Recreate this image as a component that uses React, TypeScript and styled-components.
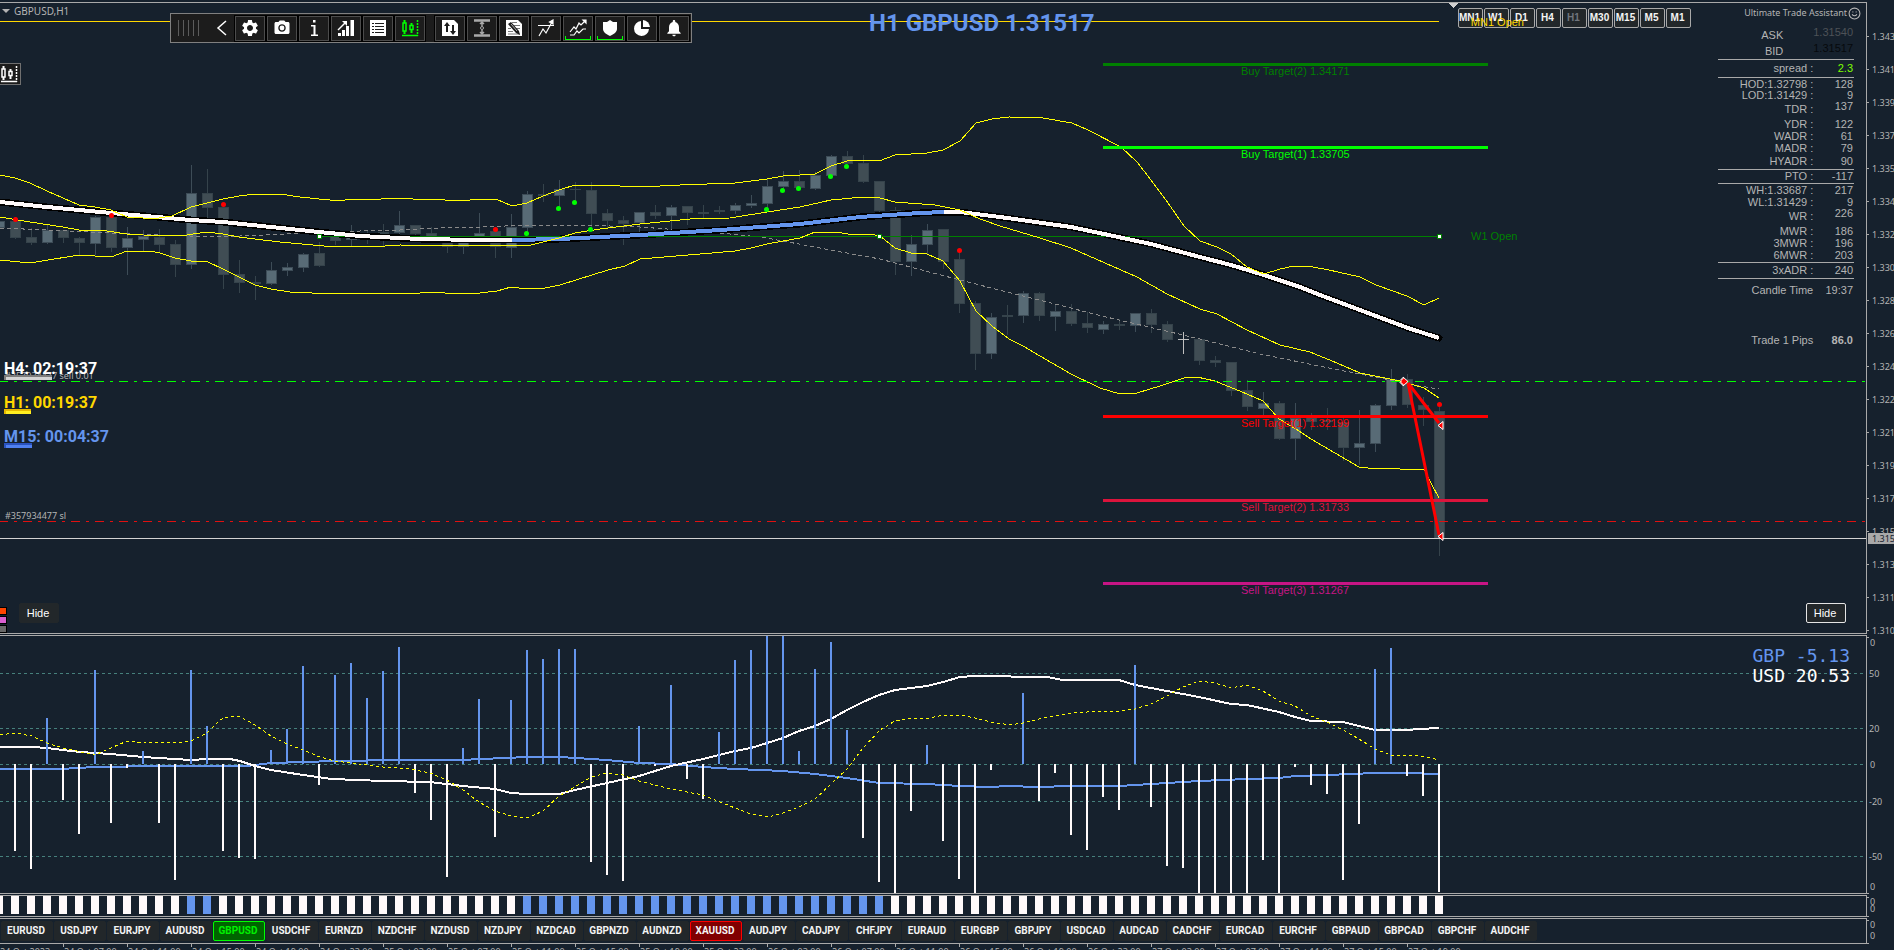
import React from "react";
import styled, { createGlobalStyle, css } from "styled-components";
import { Smile } from "lucide-react";
import { MdSettings, MdPhotoCamera, MdNotifications } from "react-icons/md";

const colors = {
  bg: "#16212d",
  line: "#a9a9a9",
  text: "#b4b4b4",
  blue: "#6495ed",
  yellow: "#ffff00",
  gold: "#ffd700",
  button: "#22272a",
};

const sans = `"Liberation Sans", Arial, sans-serif`;
const ui = `"Noto Sans", sans-serif`;
const bold = `Roboto, "Liberation Sans", sans-serif`;

const GlobalStyle = createGlobalStyle`
  * { box-sizing: border-box; }
  body { margin: 0; background: ${colors.bg}; overflow: hidden; }
  button { font: inherit; padding: 0; margin: 0; cursor: pointer; }
`;

const Page = styled.main`
  display: flex;
  flex-direction: column;
  min-height: 100vh;
  padding-top: 2px;
  background: ${colors.bg};
  color: ${colors.text};
  font-family: ${sans};
  font-size: 11px;
`;

const Pane = styled.section<{ $height?: number }>`
  display: grid;
  grid-template-columns: minmax(0, 1fr) 28px;
  margin-bottom: 1px;
  ${(p) => (p.$height ? css`flex: none; height: ${p.$height}px;` : css`flex: 1; min-height: 600px;`)}
  &:last-of-type { margin-bottom: 0; }
`;

const Plot = styled.div`
  position: relative;
  display: flex;
  overflow: hidden;
  border: 1px solid ${colors.line};
  border-left: 0;
  border-right: 0;
`;

const Drawing = styled.svg`
  flex: 1;
  min-width: 0;
  height: 100%;
  display: block;
`;

const Scale = styled.svg`
  width: 28px;
  height: 100%;
  display: block;
  font-family: ${ui};
  font-size: 9px;
  fill: ${colors.text};
`;

const PlotText = styled.text<{ $size?: number; $ui?: boolean }>`
  font-family: ${(p) => (p.$ui ? ui : sans)};
  font-size: ${(p) => p.$size ?? 11}px;
`;

const SymbolName = styled.div`
  position: absolute;
  top: 1px;
  left: 2px;
  display: flex;
  align-items: center;
  gap: 4px;
  font: 10px/14px ${ui};
`;

const Arrow = styled.span`
  border: 4px solid transparent;
  border-top-color: ${colors.text};
  border-bottom: 0;
`;

const Toolbar = styled.div`
  position: absolute;
  top: 10px;
  left: 170px;
  display: flex;
  align-items: center;
  gap: 2px;
  height: 30px;
  padding: 0 2px 0 7px;
  border: 1px solid #808080;
  background: #1c1c1c;
`;

const Grip = styled.div`
  display: flex;
  gap: 4px;
  margin-right: 10px;
  i { width: 1px; height: 16px; background: #5c5c5c; }
`;

const Collapse = styled.button`
  display: flex;
  align-items: center;
  justify-content: center;
  width: 22px;
  height: 24px;
  border: 0;
  background: none;
  color: #fff;
`;

const Tool = styled.button<{ $on?: boolean; $lead?: boolean }>`
  position: relative;
  display: flex;
  align-items: center;
  justify-content: center;
  width: 30px;
  height: 25px;
  margin-left: ${(p) => (p.$lead ? 8 : 0)}px;
  border: 1px solid #4c4c4c;
  outline: 1px solid #000;
  background: #1c1c1c;
  color: #fff;
  ${(p) =>
    p.$on &&
    css`
      &::after {
        content: "";
        position: absolute;
        left: 1px;
        right: 1px;
        bottom: 0;
        height: 3px;
        border: 1px solid #00ff00;
        border-top: 0;
      }
    `}
`;

const SideTool = styled.button`
  position: absolute;
  top: 60px;
  left: 0;
  display: flex;
  align-items: center;
  width: 21px;
  height: 22px;
  border: 1px solid #707070;
  border-left: 0;
  background: #1c1c1c;
  color: #fff;
`;

const Headline = styled.h1`
  position: absolute;
  top: 6px;
  left: 869px;
  margin: 0;
  color: ${colors.blue};
  font: 700 24px/28px ${bold};
  white-space: nowrap;
`;

const Timeframes = styled.nav`
  position: absolute;
  top: 5px;
  right: 175px;
  display: flex;
  gap: 1px;
`;

const Timeframe = styled.button<{ $current?: boolean }>`
  width: 25px;
  height: 20px;
  border: 1px solid ${colors.line};
  border-radius: 2px;
  background: ${colors.button};
  color: ${(p) => (p.$current ? "#70757c" : "#f4f4f4")};
  && { padding-right: 2px; font: 700 10px/18px ${sans}; }
  white-space: nowrap;
`;

const OpenLabel = styled.span`
  position: absolute;
  top: 12px;
  right: 342px;
  color: ${colors.gold};
  font: 11px/14px ${sans};
`;

const Assistant = styled.aside`
  position: absolute;
  top: 0;
  right: 5px;
  width: 143px;
`;

const AssistantTitle = styled.h2`
  display: flex;
  align-items: center;
  justify-content: flex-end;
  gap: 1px;
  height: 20px;
  margin: 0 0 4px;
  font: 9px/18px ${ui};
  white-space: nowrap;
`;

const Stats = styled.table`
  width: 136px;
  border-spacing: 0;
  font: 11px/11px ${sans};
`;

const StatRow = styled.tr<{ $height: number; $rule?: boolean; $tone?: string; $raised?: boolean; $indent?: boolean; $strong?: boolean }>`
  height: ${(p) => p.$height}px;
  th, td {
    padding: 0;
    text-align: right;
    white-space: nowrap;
    border-bottom: ${(p) => (p.$rule ? `1px solid ${colors.line}` : "0")};
  }
  th { font-weight: 400; padding-right: ${(p) => (p.$indent ? 30 : 0)}px; }
  td {
    width: 40px;
    padding-right: 1px;
    color: ${(p) => p.$tone ?? "inherit"};
    vertical-align: ${(p) => (p.$raised ? "top" : "middle")};
    font-weight: ${(p) => (p.$strong ? 700 : 400)};
  }
`;

const Timers = styled.div`
  position: absolute;
  top: 356px;
  left: 4px;
  display: flex;
  flex-direction: column;
  gap: 14px;
`;

const Timer = styled.div<{ $color: string }>`
  height: 20px;
  color: ${(p) => p.$color};
  font: 700 16px/20px ${bold};
  white-space: nowrap;
`;

const Progress = styled.div<{ $width: number; $edge: string; $fill: string }>`
  width: ${(p) => p.$width}px;
  height: 5px;
  margin-top: -4px;
  border: 2px solid ${(p) => p.$edge};
  border-right: 0;
  border-bottom: 0;
  background: ${(p) => p.$fill};
`;

const HideButton = styled.button<{ $side: "left" | "right" }>`
  position: absolute;
  bottom: 10px;
  ${(p) => (p.$side === "left" ? "left: 19px" : "right: 20px")};
  width: 40px;
  height: 20px;
  border: 1px solid ${(p) => (p.$side === "left" ? colors.button : "#e4e4e4")};
  border-radius: 2px;
  background: ${colors.button};
  color: #fff;
  && { padding-right: 2px; font: 11px/18px ${sans}; }
`;

const Swatches = styled.div`
  position: absolute;
  bottom: 0;
  left: 0;
  display: flex;
  flex-direction: column;
  gap: 1px;
`;

const Swatch = styled.i<{ $color: string }>`
  width: 7px;
  height: 8px;
  border: 1px solid #000;
  border-left: 0;
  background: ${(p) => p.$color};
`;

const Strength = styled.div`
  position: absolute;
  top: 10px;
  right: 16px;
  font: 18px/20px "DejaVu Sans Mono", monospace;
  white-space: pre;
  color: #fff;
  div:first-child { color: ${colors.blue}; }
`;

const Pairs = styled.nav`
  display: flex;
  gap: 1px;
  padding: 2px 1px;
`;

const Pair = styled.button<{ $tone?: "green" | "red" }>`
  flex: none;
  width: 52px;
  height: 20px;
  border: 1px solid ${(p) => (p.$tone === "green" ? "#00ff00" : p.$tone === "red" ? "#ff0000" : colors.button)};
  border-radius: 2px;
  background: ${(p) => (p.$tone === "green" ? "#006400" : p.$tone === "red" ? "#800000" : colors.button)};
  color: ${(p) => (p.$tone === "green" ? "#00f000" : "#f4f4f4")};
  && { padding-right: 2px; font: 700 10px/18px ${bold}; }
`;

const TimeAxis = styled.div`
  display: flex;
  flex: none;
  height: 6px;
  overflow: hidden;
  font: 9px/12px ${ui};
  span {
    flex: none;
    width: 64px;
    height: 3px;
    border-left: 1px solid ${colors.line};
    white-space: nowrap;
  }
  span::before { content: ""; display: block; height: 2px; }
  span:first-child { width: 63px; border-left: 0; }
`;

const x = (k: number) => 15 + 16 * k;

/* [high, body top, body bottom, low, kind] for each bar, starting one bar left of the edge; kind: 0 falling, 1 rising, 2 doji */
const candles: [number, number, number, number, number][] = [
  [221, 221, 228, 228, 1], [221, 221, 238, 238, 0], [228, 237, 243, 244, 0], [224, 230, 243, 243, 1], [230, 230, 238, 242, 0],
  [237, 238, 243, 255, 0], [216, 217, 244, 254, 1], [217, 217, 248, 251, 0], [227, 238, 248, 274, 1], [230, 236, 240, 251, 1],
  [229, 237, 245, 251, 0], [240, 244, 265, 276, 0], [165, 193, 265, 268, 1], [169, 193, 208, 218, 0], [207, 207, 275, 288, 0],
  [260, 274, 283, 292, 0], [276, 282, 284, 299, 0], [262, 270, 284, 284, 1], [263, 267, 271, 275, 1], [253, 254, 268, 271, 1],
  [242, 253, 266, 266, 0], [234, 236, 241, 244, 0], [225, 237, 240, 246, 1], [230, 233, 234, 243, 0], [224, 232, 234, 245, 0],
  [211, 225, 233, 234, 1], [225, 225, 234, 237, 0], [227, 233, 237, 240, 0], [240, 242, 247, 252, 0], [240, 241, 247, 253, 1],
  [213, 233, 237, 240, 1], [227, 231, 247, 257, 0], [214, 227, 248, 257, 1], [191, 194, 228, 232, 1], [184, 194, 196, 201, 0],
  [180, 189, 196, 208, 1], [182, 189, 190, 202, 0], [182, 190, 214, 228, 0], [209, 213, 221, 228, 0], [216, 220, 224, 244, 0],
  [212, 212, 223, 232, 1], [205, 212, 216, 218, 0], [205, 207, 216, 230, 1], [206, 206, 213, 224, 0], [205, 212, 214, 218, 0],
  [206, 210, 212, 213, 0], [203, 205, 211, 213, 1], [195, 203, 206, 207, 1], [178, 186, 204, 210, 1], [171, 181, 187, 190, 1],
  [170, 181, 188, 189, 0], [172, 175, 189, 189, 1], [155, 156, 176, 176, 1], [151, 156, 164, 164, 0], [155, 163, 182, 182, 0],
  [181, 181, 211, 212, 0], [207, 210, 262, 274, 0], [235, 244, 262, 275, 1], [224, 230, 245, 253, 1], [229, 229, 262, 268, 0],
  [253, 259, 304, 312, 0], [301, 303, 354, 369, 0], [313, 317, 354, 358, 1], [305, 315, 317, 334, 0], [291, 293, 316, 322, 1],
  [292, 293, 316, 320, 0], [304, 311, 317, 330, 1], [304, 311, 324, 325, 0], [312, 323, 328, 332, 0], [321, 324, 330, 333, 1],
  [319, 324, 326, 329, 0], [313, 313, 326, 331, 1], [309, 313, 325, 332, 0], [321, 324, 340, 341, 0], [332, 339, 340, 353, 2],
  [339, 339, 361, 364, 0], [356, 360, 363, 366, 0], [362, 362, 391, 395, 0], [380, 390, 407, 410, 0], [392, 403, 409, 416, 1],
  [401, 403, 439, 439, 0], [403, 418, 439, 459, 1], [413, 417, 422, 429, 0], [408, 420, 422, 429, 0], [418, 422, 448, 460, 0],
  [410, 443, 448, 464, 1], [404, 405, 444, 451, 1], [369, 379, 406, 409, 1], [374, 379, 405, 407, 0], [397, 405, 410, 425, 0],
  [407, 411, 539, 555, 0],
];

const upperBand =
  "0,175 15,178 30,183 47,191 63,198 79,205 95,207 111,210 127,217 143,218 159,218 172,216 191,207 207,203 223,199 239,196 255,194 280,194 300,197 319,199 330,200 345,200 360,199 373,200 390,198 405,198 420,200 430,199 445,200 470,200 496,199 512,206 527,203 543,196 559,190 575,185 600,185 640,187 680,185 735,183 767,179 783,176 800,175 815,174 831,166 847,161 863,160 879,161 895,155 927,153 943,150 960,141 976,123 992,119 1009,117 1043,118 1072,123 1088,130 1121,147 1137,162 1151,180 1166,200 1184,226 1200,241 1217,247 1231,254 1247,267 1264,274 1280,269 1294,266 1313,267 1329,270 1360,277 1376,285 1407,296 1424,305 1439,298";
const middleBand =
  "0,217 30,222 63,227 79,230 100,230 127,234 143,235 180,236 207,232 223,234 239,237 255,239 280,242 335,247 360,246 385,246 400,245 480,246 500,245 527,246 543,242 559,238 575,233 600,229 640,224 690,219 730,218 767,212 800,207 831,200 863,197 880,198 895,202 935,205 960,210 980,219 1000,226 1040,238 1071,248 1105,263 1137,277 1167,294 1200,309 1217,314 1247,330 1280,345 1310,352 1337,363 1360,373 1400,381 1424,388 1439,398";
const lowerBand =
  "0,260 30,263 79,255 111,257 127,251 150,251 160,253 175,258 191,261 208,262 223,269 239,277 255,285 271,289 290,292 312,293 420,293 430,292 445,293 480,293 497,291 511,287 527,289 545,288 560,285 608,270 625,266 640,259 700,254 735,251 751,248 767,244 800,238 815,232 835,232 848,234 875,235 880,236 895,248 911,253 927,254 943,261 960,281 976,311 992,326 1009,339 1023,346 1040,356 1071,374 1100,388 1120,394 1137,393 1160,386 1184,378 1197,377 1215,381 1247,394 1263,401 1279,419 1296,429 1311,439 1359,467 1368,468 1400,469 1424,469 1431,483 1439,498";
const slowAverage =
  "0,228 70,231 130,234 190,236 240,236 310,233 360,231 400,230 440,228 480,227 530,225 580,225 640,227 680,230 720,233 760,237 783,241 830,250 880,259 895,263 960,280 1007,292 1055,304 1102,316 1149,327 1200,339 1260,354 1329,368 1370,376 1419,386 1439,389";
const trendStart = "0,202 47,207 111,213 191,220 223,222 319,232 360,236 420,239 480,240 512,240";
const trendRise = "512,240 560,239 640,235 720,230 800,224 860,217 920,213 944,212";
const trendFall =
  "944,212 960,212 1000,217 1071,227 1104,234 1151,244 1200,257 1231,265 1264,275 1300,287 1320,295 1360,310 1408,328 1439,338";

const redDots = [[15, 219], [111, 215], [223, 204], [495, 229], [959, 250], [1439, 404]];
const greenDots = [[526, 233], [558, 208], [574, 202], [590, 229], [766, 209], [782, 190], [798, 188], [830, 176], [846, 166]];

const targets = [
  { y: 64, color: "#008000", label: "Buy Target(2) 1.34171" },
  { y: 147, color: "#00ff00", label: "Buy Target(1) 1.33705" },
  { y: 416, color: "#ff0000", label: "Sell Target(1) 1.32199" },
  { y: 500, color: "#dc143c", label: "Sell Target(2) 1.31733" },
  { y: 583, color: "#c71585", label: "Sell Target(3) 1.31267" },
];

const prices = ["1.343", "1.341", "1.339", "1.337", "1.335", "1.334", "1.332", "1.330", "1.328", "1.326", "1.324", "1.322", "1.321", "1.319", "1.317", "1.315", "1.313", "1.311", "1.310"];

/* bar index -> y of the bar's free end */
const strengthUp: Record<number, number> = {
  2: 718, 5: 670, 8: 751, 11: 670, 12: 726, 16: 750, 17: 729, 18: 666, 20: 675, 21: 663, 22: 698, 23: 671, 24: 647, 28: 748, 29: 699,
  31: 700, 32: 650, 33: 659, 34: 649, 35: 649, 39: 726, 41: 685, 44: 732, 45: 660, 46: 650, 47: 636, 48: 636, 49: 751, 50: 669,
  51: 642, 52: 730, 57: 745, 63: 693, 70: 665, 85: 669, 86: 648,
};
const strengthDown: Record<number, number> = {
  0: 851, 1: 869, 3: 800, 4: 834, 6: 823, 7: 768, 9: 823, 10: 880, 13: 851, 14: 858, 15: 859, 19: 785, 25: 793, 26: 820, 27: 877,
  30: 837, 36: 862, 37: 875, 38: 881, 40: 766, 42: 779, 43: 799, 53: 838, 54: 882, 55: 893, 56: 811, 58: 841, 59: 879, 60: 893,
  61: 770, 64: 801, 65: 773, 66: 835, 67: 850, 68: 797, 69: 810, 71: 807, 72: 866, 73: 868, 74: 893, 75: 893, 76: 893, 77: 893,
  78: 860, 79: 893, 80: 767, 81: 785, 82: 794, 83: 880, 84: 824, 87: 776, 88: 796, 89: 892,
};
const usdLine =
  "0,747 32,747 47,748 63,750 80,752 111,754 143,757 175,759 191,760 207,759 230,759 240,761 255,766 271,770 303,775 332,779 383,781 430,782 463,786 495,789 511,793 527,794 559,794 575,790 607,783 639,776 671,766 703,759 735,751 751,748 767,743 783,738 799,731 815,726 831,719 847,710 863,702 879,695 895,690 927,686 943,682 960,677 975,676 1047,677 1063,680 1119,680 1135,685 1199,697 1231,704 1247,705 1279,712 1295,717 1311,721 1343,722 1359,726 1375,730 1407,730 1420,729 1439,728";
const gbpLine =
  "0,769 60,769 95,767 160,766 247,766 271,763 335,761 400,760 460,760 527,757 560,757 607,760 639,763 671,764 703,767 735,769 760,770 783,771 815,774 847,778 879,783 927,784 960,786 991,787 1007,786 1039,787 1070,786 1119,786 1151,784 1199,781 1247,779 1279,778 1295,776 1327,775 1375,773 1407,773 1439,774";
const spreadLine =
  "0,735 15,733 32,736 47,743 63,748 95,755 111,748 127,741 145,743 160,742 175,743 191,741 207,733 215,725 223,718 239,716 255,725 271,736 287,744 303,750 320,757 335,761 383,767 410,769 430,773 447,780 463,790 479,802 495,811 511,816 527,818 543,811 559,796 575,787 591,777 607,773 623,775 639,781 671,789 703,795 735,808 751,814 768,817 783,813 799,807 815,799 831,784 847,769 863,748 880,730 895,721 911,718 930,718 943,715 960,715 975,718 991,722 1010,725 1023,723 1039,719 1071,713 1087,712 1119,711 1135,709 1151,704 1167,696 1183,687 1199,681 1215,683 1231,688 1247,685 1263,691 1279,701 1295,706 1311,716 1327,722 1343,730 1359,739 1375,749 1391,755 1410,755 1427,757 1439,760";

const isBlueBar = (k: number) => k === 11 || k === 12 || (k >= 32 && k <= 54);

const pairs = "EURUSD USDJPY EURJPY AUDUSD GBPUSD USDCHF EURNZD NZDCHF NZDUSD NZDJPY NZDCAD GBPNZD AUDNZD XAUUSD AUDJPY CADJPY CHFJPY EURAUD EURGBP GBPJPY USDCAD AUDCAD CADCHF EURCAD EURCHF GBPAUD GBPCAD GBPCHF AUDCHF".split(" ");

const times = ["24 Oct 2023", "24 Oct 07:00", "24 Oct 11:00", "24 Oct 15:00", "24 Oct 19:00", "24 Oct 23:00", "25 Oct 03:00", "25 Oct 07:00", "25 Oct 11:00", "25 Oct 15:00", "25 Oct 19:00", "25 Oct 23:00", "26 Oct 03:00", "26 Oct 07:00", "26 Oct 11:00", "26 Oct 15:00", "26 Oct 19:00", "26 Oct 23:00", "27 Oct 03:00", "27 Oct 07:00", "27 Oct 11:00", "27 Oct 15:00", "27 Oct 19:00"];

type Stat = { label: string; value: string; height: number; rule?: boolean; tone?: string; raised?: boolean; indent?: boolean };
const stats: Stat[] = [
  { label: "ASK", value: "1.31540", height: 16, tone: "#4d5257", indent: true, raised: true },
  { label: "BID", value: "1.31517", height: 17, tone: "#06090c", indent: true, raised: true, rule: true },
  { label: "spread :", value: "2.3", height: 18, tone: "#7cff00", rule: true },
  { label: "HOD:1.32798 :", value: "128", height: 12 },
  { label: "LOD:1.31429 :", value: "9", height: 11 },
  { label: "TDR :", value: "137", height: 17, raised: true },
  { label: "YDR :", value: "122", height: 12 },
  { label: "WADR :", value: "61", height: 12 },
  { label: "MADR :", value: "79", height: 12 },
  { label: "HYADR :", value: "90", height: 16, rule: true },
  { label: "PTO :", value: "-117", height: 14, rule: true },
  { label: "WH:1.33687 :", value: "217", height: 12 },
  { label: "WL:1.31429 :", value: "9", height: 12 },
  { label: "WR :", value: "226", height: 17, raised: true },
  { label: "MWR :", value: "186", height: 12 },
  { label: "3MWR :", value: "196", height: 12 },
  { label: "6MWR :", value: "203", height: 14, rule: true },
  { label: "3xADR :", value: "240", height: 16, rule: true },
  { label: "Candle Time", value: "19:37", height: 22 },
];

const CandlesIcon = () => (
  <svg width="18" height="18" viewBox="0 0 18 18" fill="none" stroke="currentColor">
    <path d="M3.500 1v3M3.500 12v3M10.500 4v2M10.500 11v3" strokeWidth="2" />
    <path d="M2 4h3v8H2zM9 6.500h3v4H9z" strokeWidth="1.500" />
    <path d="M1 16.500h16" strokeWidth="1.500" />
    <path d="M16.500 1v16" strokeWidth="1.500" strokeDasharray="2 1" />
  </svg>
);
const InfoIcon = () => (
  <svg width="18" height="18" viewBox="0 0 18 18" fill="currentColor">
    <path d="M8 1h2.500v2.500H8zM6 6h4.500v9.500H13V17H6v-1.500h2.500v-8H6z" />
  </svg>
);
const GrowthIcon = () => (
  <svg width="18" height="18" viewBox="0 0 18 18" fill="currentColor">
    <path d="M1 14h3v3H1zM5 11h3v6H5zM9 7h3v10H9zM13.500 1H17v16h-3.500z" />
    <path d="M1 11 8 4" stroke="currentColor" strokeWidth="1.500" />
    <path d="M5 2h5v5z" />
  </svg>
);
const ListIcon = () => (
  <svg width="18" height="18" viewBox="0 0 18 18">
    <path d="M1 1h16v16H1z" fill="currentColor" />
    <path d="M3 4.500h2m1 0h9M3 7.500h2m1 0h9M3 10.500h2m1 0h9M3 13.500h2m1 0h9" stroke="#1c1c1c" />
  </svg>
);
const TransferIcon = () => (
  <svg width="18" height="18" viewBox="0 0 18 18">
    <path d="M1 1h12l4 4v12H1z" fill="currentColor" />
    <path d="M6 13V5M12 6v8" stroke="#1c1c1c" strokeWidth="2" />
    <path d="M3 7l3-4 3 4zM9 12l3 4 3-4z" fill="#1c1c1c" />
  </svg>
);
const RangeIcon = () => (
  <svg width="18" height="18" viewBox="0 0 18 18" fill="none" stroke="#a9a9a9">
    <path d="M1 1.500h16M1 16.500h16" strokeWidth="2.500" />
    <path d="M9 3v4M9 11v4M7 5l2-2 2 2M7 13l2 2 2-2" strokeWidth="1.500" />
    <circle cx="9" cy="9" r="1.500" />
  </svg>
);
const NoteIcon = () => (
  <svg width="18" height="18" viewBox="0 0 18 18">
    <path d="M1 1h12l4 4v12H1z" fill="currentColor" />
    <path d="M7 3.500h5M9 6.500h6M11 9.500h4M3 9.500h3M3 12.500h5M3 15h12" stroke="#777" />
    <path d="M3 5l3-2 8 9 1 4-4-2z" fill="#1c1c1c" />
    <path d="M6 5l6 7" stroke="#aaa" />
  </svg>
);
const BreakoutIcon = () => (
  <svg width="18" height="18" viewBox="0 0 18 18" fill="none" stroke="currentColor" strokeWidth="1.200">
    <path d="M1 6.500h16M2 17l4-7 3 4 6-11" />
    <path d="M12.500 3l3.500-2v4z" fill="currentColor" />
  </svg>
);
const TrendIcon = () => (
  <svg width="18" height="18" viewBox="0 0 18 18" fill="none" stroke="currentColor" strokeWidth="1.200">
    <path d="M1 13l4-5 2 2 3-6 2 2 4-4M1 16h4l3-4 2 2 4-4h3" />
    <path d="M14 1h3v3z" fill="currentColor" />
  </svg>
);
const ShieldIcon = () => (
  <svg width="18" height="18" viewBox="0 0 18 18" fill="currentColor">
    <path d="M9 1l3 2h4v7c0 3-3 5-7 7-4-2-7-4-7-7V3h4z" />
  </svg>
);
const PieIcon = () => (
  <svg width="18" height="18" viewBox="0 0 18 18" fill="currentColor">
    <path d="M8 2a7.500 7.500 0 1 0 8 8H8z" />
    <path d="M10 1a7.500 7.500 0 0 1 7 7h-7z" />
  </svg>
);

const tools: { name: string; icon: React.ReactNode; on?: boolean; lead?: boolean; color?: string }[] = [
  { name: "Settings", icon: <MdSettings size={20} /> },
  { name: "Screenshot", icon: <MdPhotoCamera size={18} /> },
  { name: "Information", icon: <InfoIcon /> },
  { name: "Performance", icon: <GrowthIcon /> },
  { name: "List", icon: <ListIcon /> },
  { name: "Candles", icon: <CandlesIcon />, color: "#00ff00" },
  { name: "Orders", icon: <TransferIcon />, lead: true },
  { name: "Range", icon: <RangeIcon /> },
  { name: "Notes", icon: <NoteIcon /> },
  { name: "Breakout", icon: <BreakoutIcon /> },
  { name: "Trend", icon: <TrendIcon />, on: true },
  { name: "Protection", icon: <ShieldIcon />, on: true },
  { name: "Statistics", icon: <PieIcon /> },
  { name: "Alerts", icon: <MdNotifications size={20} /> },
];

const ToolGlyph = styled.span<{ $color?: string }>`
  display: flex;
  color: ${(p) => p.$color ?? "#fff"};
`;

function Candle({ index, data }: { index: number; data: [number, number, number, number, number] }) {
  const [high, top, bottom, low, kind] = data;
  const c = x(index);
  const edge = kind === 2 ? "#c0c0c0" : kind === 1 ? "#3d4c57" : "#35434b";
  return (
    <g>
      <rect x={c} y={high} width={1} height={low - high + 1} fill={edge} />
      <rect x={c - 5} y={top} width={11} height={Math.max(1, bottom - top)} fill={edge} />
      {kind !== 2 && bottom - top > 2 && (
        <rect x={c - 4} y={top + 1} width={9} height={bottom - top - 2} fill={kind ? "#586b76" : "#404d54"} />
      )}
    </g>
  );
}

function PriceDrawing() {
  return (
    <Drawing>
      <g transform="translate(0,-3)" fill="none" shapeRendering="crispEdges">
        <path d="M0 21.500H1439" stroke={colors.gold} />
        <path d="M1449 3h9l-4 5h-1z" fill="#d0d0d0" />
        {candles.map((c, i) => <Candle key={i} index={i - 1} data={c} />)}
        <polyline points={slowAverage} stroke="#8a8a8a" strokeDasharray="4 3" />
        <g strokeWidth={7} stroke="#000" strokeLinejoin="round">
          <polyline points={trendStart} /><polyline points={trendRise} /><polyline points={trendFall} strokeLinecap="round" />
        </g>
        <path d="M319 236.500H1439" stroke="#008000" />
        <polyline points={trendStart} stroke="#fffafa" strokeWidth={4} />
        <polyline points={trendRise} stroke={colors.blue} strokeWidth={4} />
        <polyline points={trendFall} stroke="#fffafa" strokeWidth={4} />
        <g stroke={colors.yellow}>
          <polyline points={upperBand} /><polyline points={middleBand} /><polyline points={lowerBand} />
        </g>
        {[319, 879, 1439].map((cx) => (
          <g key={cx}>
            <rect x={cx - 2} y={234} width={5} height={5} fill="#008000" />
            <rect x={cx - 1} y={235} width={3} height={3} fill="#fff" />
          </g>
        ))}
        <path d="M-1 381.500H1866" stroke="#00ff00" strokeDasharray="9 6 3 6" />
        <path d="M-1 521.500H1866" stroke="#e01010" strokeDasharray="9 6 3 6" />
        <path d="M0 538.500H1866" stroke="#d3d3d3" />
        {targets.map((t) => <rect key={t.y} x={1103} y={t.y - 1} width={385} height={3} fill={t.color} />)}
      </g>
      <g transform="translate(0,-3)">
        {redDots.map(([cx, cy]) => <circle key={cx} cx={cx + 0.5} cy={cy + 0.5} r={2.5} fill="#ff0000" />)}
        {greenDots.map(([cx, cy]) => <circle key={cx} cx={cx + 0.5} cy={cy + 0.5} r={2.5} fill="#00ff00" />)}
        {targets.map((t) => <PlotText key={t.y} x={1241} y={t.y + 11} fill={t.color}>{t.label}</PlotText>)}
        <PlotText x={1471} y={240} fill="#008000">W1 Open</PlotText>
        <path d="M1408 383L1439 423M1408 383L1439 535" stroke="#ff0000" strokeWidth={3} />
        <g fill="#ff0000" stroke="#fff">
          <path d="M1401 379h2v-2l5 4.500-5 4.500v-2h-2z" />
          <path d="M1438 425.500l5-4v8zM1438 536.500l5-4v8z" />
        </g>
        <PlotText $ui $size={9} x={5} y={379} fill={colors.text}>#357934477 sell 0.01</PlotText>
        <PlotText $ui $size={9} x={5} y={519} fill={colors.text}>#357934477 sl</PlotText>
      </g>
    </Drawing>
  );
}

function PriceScale() {
  return (
    <Scale>
      <g transform="translate(0,-2)">
        <path d="M0.500 2V634" stroke={colors.line} />
        {prices.map((p, i) => (
          <g key={p}>
            <path d={`M1 ${36.5 + 33 * i}h2`} stroke={colors.line} />
            <text x={6} y={40 + 33 * i}>{p}</text>
          </g>
        ))}
        <rect x={2} y={533} width={26} height={11} fill={colors.line} />
        <text x={6} y={542} fill={colors.bg}>1.315</text>
      </g>
    </Scale>
  );
}

function StrengthDrawing() {
  return (
    <Drawing>
      <g transform="translate(0,-636)" fill="none" shapeRendering="crispEdges">
        {[673, 728, 764, 801, 856].map((y) => (
          <path key={y} d={`M0 ${y}.5H1866`} stroke="#46807c" strokeDasharray="3 3" />
        ))}
        <polyline points={gbpLine} stroke={colors.blue} strokeWidth={2} />
        <polyline points={usdLine} stroke="#fffafa" strokeWidth={2} />
        {Object.entries(strengthUp).map(([k, y]) => <rect key={k} x={x(+k) - 1} y={y} width={2} height={764 - y} fill={colors.blue} />)}
        {Object.entries(strengthDown).map(([k, y]) => <rect key={k} x={x(+k) - 1} y={764} width={2} height={y - 764} fill="#fffafa" />)}
        <polyline points={spreadLine} stroke={colors.yellow} strokeDasharray="3 3" />
      </g>
    </Drawing>
  );
}

const ZeroScale = ({ height, labels }: { height: number; labels: [number, string][] }) => (
  <Scale>
    <path d={`M0.500 0V${height}`} stroke={colors.line} />
    <path d={`M1 2.500h2M1 ${height - 1}.5h2`} stroke={colors.line} />
    {labels.map(([y, t]) => <text key={y} x={t.length > 1 ? 3 : 4} y={y}>{t}</text>)}
  </Scale>
);

export default function App() {
  return (
    <Page>
      <GlobalStyle />
      <Pane>
        <Plot>
          <PriceDrawing />
          <SymbolName><Arrow />GBPUSD,H1</SymbolName>
          <Toolbar role="toolbar" aria-label="Chart tools">
            <Grip><i /><i /><i /><i /><i /></Grip>
            <Collapse aria-label="Collapse">
              <svg width="12" height="18" viewBox="0 0 12 18" fill="none" stroke="currentColor" strokeWidth="1.500"><path d="M10 2L2 9l8 7" /></svg>
            </Collapse>
            {tools.map((t) => (
              <Tool key={t.name} aria-label={t.name} $on={t.on} $lead={t.lead}>
                <ToolGlyph $color={t.color}>{t.icon}</ToolGlyph>
              </Tool>
            ))}
          </Toolbar>
          <SideTool aria-label="Show candles"><CandlesIcon /></SideTool>
          <Headline>H1 GBPUSD 1.31517</Headline>
          <Timeframes aria-label="Timeframe">
            {["MN1", "W1", "D1", "H4", "H1", "M30", "M15", "M5", "M1"].map((t) => (
              <Timeframe key={t} $current={t === "H1"}>{t}</Timeframe>
            ))}
          </Timeframes>
          <OpenLabel>MN1 Open</OpenLabel>
          <Assistant>
            <AssistantTitle>Ultimate Trade Assistant<Smile size={13} strokeWidth={2} /></AssistantTitle>
            <Stats>
              <tbody>
                {stats.map((s) => (
                  <StatRow key={s.label} $height={s.height} $rule={s.rule} $tone={s.tone} $raised={s.raised} $indent={s.indent}>
                    <th scope="row">{s.label}</th>
                    <td>{s.value}</td>
                  </StatRow>
                ))}
                <StatRow $height={28}><td colSpan={2} /></StatRow>
                <StatRow $height={22} $strong>
                  <th scope="row">Trade 1 Pips</th>
                  <td>86.0</td>
                </StatRow>
              </tbody>
            </Stats>
          </Assistant>
          <Timers>
            <Timer $color="#ffffff">H4: 02:19:37<Progress $width={48} $edge="#7c7c7c" $fill="#d3d3d3" /></Timer>
            <Timer $color="#ffd700">H1: 00:19:37<Progress $width={27} $edge="#e6b800" $fill="#ffee20" /></Timer>
            <Timer $color={colors.blue}>M15: 00:04:37<Progress $width={28} $edge="#2a52be" $fill="#5080f0" /></Timer>
          </Timers>
          <Swatches><Swatch $color="#ff4500" /><Swatch $color="#da5fd0" /><Swatch $color="#696969" /></Swatches>
          <HideButton $side="left">Hide</HideButton>
          <HideButton $side="right">Hide</HideButton>
        </Plot>
        <PriceScale />
      </Pane>
      <Pane $height={259}>
        <Plot>
          <StrengthDrawing />
          <Strength><div>GBP -5.13</div><div>USD 20.53</div></Strength>
        </Plot>
        <ZeroScale height={259} labels={[[11, "0"], [42, "50"], [97, "20"], [133, "0"], [170, "-20"], [225, "-50"], [255, "0"]]} />
      </Pane>
      <Pane $height={22}>
        <Plot>
          <Drawing>
            {Array.from({ length: 91 }, (_, i) => i - 1).map((k) => (
              <rect key={k} x={x(k) - 4} y={0} width={8} height={18} fill={isBlueBar(k) ? colors.blue : "#fffafa"} />
            ))}
          </Drawing>
        </Plot>
        <ZeroScale height={22} labels={[[10, "0"], [17, "0"]]} />
      </Pane>
      <Pane $height={26}>
        <Plot>
          <Pairs aria-label="Symbols">
            {pairs.map((p) => (
              <Pair key={p} $tone={p === "GBPUSD" ? "green" : p === "XAUUSD" ? "red" : undefined}>{p}</Pair>
            ))}
          </Pairs>
        </Plot>
        <ZeroScale height={26} labels={[[10, "0"], [21, "0"]]} />
      </Pane>
      <TimeAxis>{times.map((t) => <span key={t}>{t}</span>)}</TimeAxis>
    </Page>
  );
}
